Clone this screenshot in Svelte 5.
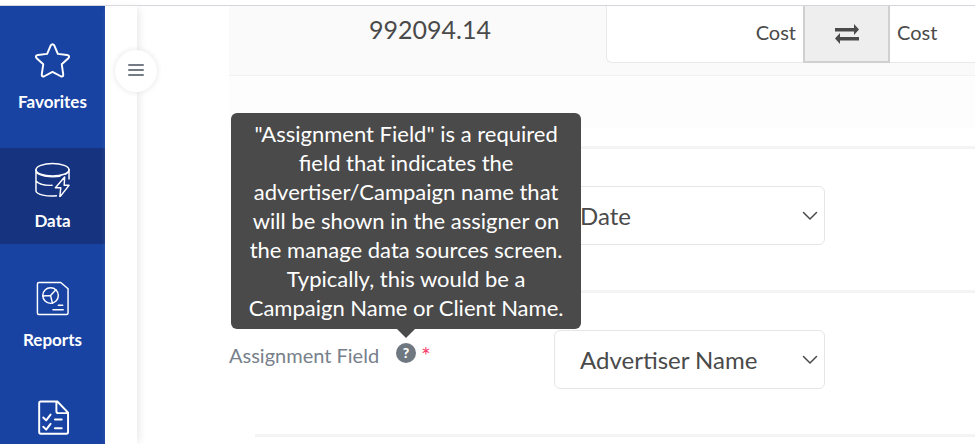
<script>
  const navItems = [
    { label: "Favorites", icon: "star" },
    { label: "Data", icon: "data", active: true },
    { label: "Reports", icon: "report" },
    { icon: "tasks" },
  ];

  const fields = [
    { id: "date-field", name: "Date", options: ["Date"] },
    {
      id: "assignment-field",
      label: "Assignment Field",
      options: ["Advertiser Name"],
      required: true,
      help: '"Assignment Field" is a required field that indicates the advertiser/Campaign name that will be shown in the assigner on the manage data sources screen. Typically, this would be a Campaign Name or Client Name.',
    },
  ];

  let sourceName = $state("Cost");
  let targetName = $state("Cost");

  function swap() {
    [sourceName, targetName] = [targetName, sourceName];
  }
</script>

<div class="app">
  <header class="topbar"></header>

  <div class="body">
    <nav class="sidebar">
      {#each navItems as item}
        <a
          class="nav-item"
          class:active={item.active}
          href="#{item.icon}"
          aria-label={item.label ?? item.icon}
        >
          <svg class="nav-icon" viewBox="0 0 36 36">
            {#if item.icon === "star"}
              <path
                stroke-width="2"
                d="M16.200 2.500Q18 0 19.800 2.500L23.500 11.200 33 12.300Q36.500 13 34.300 15.600L27.500 21.800 29 32Q29.300 35.500 26.500 34.200L18 29.800 9.500 34.200Q6.700 35.500 7 32L8.500 21.800 1.700 15.600Q-.5 13 3 12.300L12.500 11.200Z"
              />
            {:else if item.icon === "data"}
              <ellipse cx="18" cy="8" rx="17" ry="6.500" />
              <path d="M1 8v22c1 3.500 11 5.800 21 4.800M35 8v9.500M1 10c2 4 14 6.300 24.500 4.800M31.500 12.500l2.500-2M1 19.500c2 3 9 4.800 16.500 4.500" />
              <path d="M30.500 15.500L21 26.500h5.500L25.500 36l9.500-12h-5z" />
            {:else if item.icon === "report"}
              <path d="M4 1.500h22.500L34 8v25q0 1.500-1.500 1.500H4Q2.500 34.500 2.500 33V3Q2.500 1.500 4 1.500z" />
              <circle cx="16" cy="15" r="8" />
              <path d="M8 15.500l8-.5 5.500-6M16 15l2 8M24 25h4.500M18.500 29.500h10.500" />
            {:else}
              <path
                stroke-width="2"
                d="M6 1.500h17L34 13v20q0 1.700-1.700 1.700H6Q4.300 34.700 4.300 33V3.200Q4.300 1.500 6 1.500zM22 2v9.500q0 2 2 2h9.500"
              />
              <path stroke-width="2" d="M8.500 18l3 3 4.500-6M8.500 27.500l3 3 4.500-6M20.500 20h7M20.500 29h7" />
            {/if}
          </svg>
          {#if item.label}
            <span>{item.label}</span>
          {/if}
        </a>
      {/each}
    </nav>

    <aside class="rail">
      <button class="toggle" aria-label="Toggle menu">
        <svg width="16" height="14" viewBox="0 0 16 14">
          <path d="M1 1h14M1 6h14M1 11h14" />
        </svg>
      </button>
    </aside>

    <main class="content">
      <div class="mapping-row">
        <span class="amount">992094.14</span>
        <div class="mapping">
          <input class="source" aria-label="Source name" bind:value={sourceName} />
          <button class="swap" aria-label="Swap names" onclick={swap}>
            <svg width="26" height="20" viewBox="0 0 26 20">
              <path d="M1 4h19V0l5 5.500-5 5.500V7.500H1zM25 16.500H6V20l-5-5.500L6 9v4h19z" />
            </svg>
          </button>
          <input class="target" aria-label="Target name" bind:value={targetName} />
        </div>
      </div>
      <div class="spacer"></div>

      {#each fields as field}
        <hr />
        <div class="field">
          <div class="field-label">
            {#if field.label}
              <label for={field.id}>{field.label}</label>
            {/if}
            {#if field.help}
              <button class="help" aria-label="Help" aria-describedby="{field.id}-tip">
                ?
                <span class="tooltip" id="{field.id}-tip" role="tooltip">{field.help}</span>
              </button>
            {/if}
            {#if field.required}
              <span class="required">*</span>
            {/if}
          </div>
          <div class="select">
            <select id={field.id} aria-label={field.name}>
              {#each field.options as option}
                <option>{option}</option>
              {/each}
            </select>
            <svg width="16" height="10" viewBox="0 0 16 10">
              <path d="M1.500 1.500L8 8l6.500-6.500" />
            </svg>
          </div>
        </div>
      {/each}
      <hr />
    </main>
  </div>
</div>

<style>
  :global(body) {
    margin: 0;
    background: #fff;
  }

  .app {
    display: flex;
    flex-direction: column;
    height: 100vh;
    overflow: hidden;
    font-family: Lato, "Open Sans", sans-serif;
    color: #4a4a4a;
  }

  .app * {
    box-sizing: border-box;
  }

  button,
  input,
  select {
    font-family: inherit;
    color: inherit;
  }

  svg {
    fill: none;
    stroke: currentColor;
    stroke-linecap: round;
    stroke-linejoin: round;
  }

  .topbar {
    flex: none;
    height: 6px;
    border-bottom: 1px solid #d5d5dc;
  }

  .body {
    display: flex;
    flex: 1;
    min-height: 0;
  }

  .sidebar {
    display: flex;
    flex: none;
    flex-direction: column;
    gap: 23px;
    width: 105px;
    padding-top: 23px;
    background: #1943a3;
  }

  .nav-item {
    display: flex;
    flex: none;
    flex-direction: column;
    align-items: center;
    gap: 14px;
    height: 96px;
    padding-top: 14px;
    color: #fff;
    font-size: 17px;
    font-weight: 700;
    line-height: 20px;
    text-decoration: none;
  }

  .nav-item.active {
    background: #16337f;
  }

  .nav-icon {
    width: 35px;
    height: 35px;
    stroke-width: 1.5;
  }

  .rail {
    position: relative;
    flex: none;
    width: 32px;
    box-shadow: 4px 0 8px -2px #e8e8e8;
  }

  .toggle {
    position: absolute;
    top: 44px;
    right: -20px;
    display: grid;
    place-items: center;
    width: 42px;
    height: 42px;
    padding: 0;
    border: 0;
    border-radius: 50%;
    background: #fff;
    box-shadow: 0 0 6px #e4e4e4;
    color: #747b84;
  }

  .toggle path {
    stroke-width: 2;
  }

  .content {
    flex: 1;
    min-width: 0;
    padding-left: 92px;
  }

  .mapping-row {
    display: grid;
    grid-template-columns: 377px 1fr;
    height: 70px;
    border-bottom: 1px solid #f2f2f2;
    background: #fafafa;
  }

  .amount {
    padding: 7px 0 0 25px;
    font-size: 25px;
    line-height: 32px;
    text-align: center;
  }

  .mapping {
    display: flex;
    height: 57px;
    min-width: 0;
  }

  .mapping input {
    flex: none;
    width: 197px;
    padding: 0 7px 5px;
    border: 1px solid #e9e9e9;
    border-top: 0;
    background: #fff;
    font-size: 20px;
  }

  .mapping .source {
    border-right: 0;
    border-bottom-left-radius: 6px;
    text-align: right;
  }

  .mapping .target {
    border-left: 0;
  }

  .swap {
    flex: none;
    width: 87px;
    padding: 4px 0 0;
    border: 2px solid #d0d0d0;
    border-top: 0;
    background: #eee;
  }

  .swap path {
    fill: currentColor;
    stroke: none;
  }

  .spacer {
    height: 52px;
    margin-bottom: 18px;
    background: #fdfdfd;
  }

  hr {
    height: 3px;
    margin: 0 0 0 26px;
    border: 0;
    background: #f4f4f4;
  }

  .field {
    display: grid;
    grid-template-columns: 325px 271px;
    align-items: center;
    padding: 37px 0 45px;
  }

  .field-label {
    display: flex;
    align-items: center;
    padding-bottom: 10px;
    color: #77808b;
    font-size: 20px;
    line-height: 24px;
  }

  .help {
    position: relative;
    width: 20px;
    height: 20px;
    margin: 0 5px 4px 17px;
    padding: 0;
    border: 0;
    border-radius: 50%;
    background: #6f7781;
    color: #fff;
    font-size: 14px;
    font-weight: 900;
    line-height: 20px;
  }

  .tooltip {
    position: absolute;
    bottom: 34px;
    left: 50%;
    width: 350px;
    margin-left: -175px;
    padding: 6px 12px 7px;
    border-radius: 6px;
    background: #4a4a4a;
    font-size: 22px;
    font-weight: 400;
    line-height: 29px;
  }

  .tooltip::after {
    position: absolute;
    top: 100%;
    left: 50%;
    margin-left: -9px;
    border: 9px solid transparent;
    border-top-color: #4a4a4a;
    border-bottom: 0;
    content: "";
  }

  .required {
    color: #f6416c;
    font-size: 23px;
  }

  .select {
    display: grid;
    align-items: center;
  }

  .select select,
  .select svg {
    grid-area: 1 / 1;
  }

  .select select {
    height: 59px;
    padding: 0 40px 0 25px;
    border: 1px solid #e6e6e6;
    border-radius: 6px;
    background: #fff;
    font-size: 24px;
    appearance: none;
  }

  .select svg {
    justify-self: end;
    margin-right: 7px;
    stroke-width: 1.5;
    pointer-events: none;
  }
</style>
